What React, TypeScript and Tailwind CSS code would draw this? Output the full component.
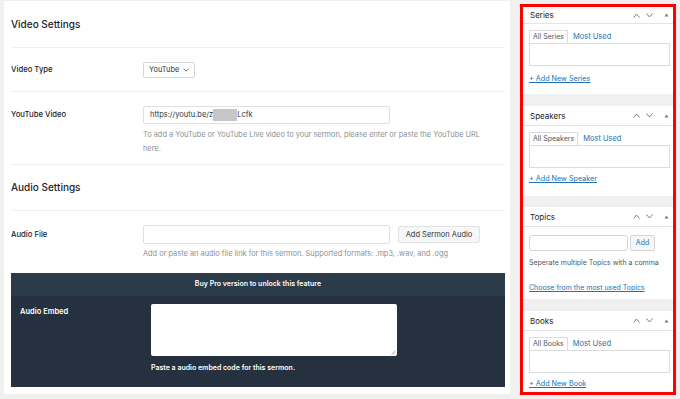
import React from "react";

const Chevrons = () => (
  <div className="flex items-center gap-[6px] text-[#787c82]">
    <svg width="7" height="5" viewBox="0 0 7 5" fill="none" stroke="currentColor" strokeWidth="1">
      <path d="M0.5 4.5 L3.5 1 L6.5 4.5" />
    </svg>
    <svg width="7" height="5" viewBox="0 0 7 5" fill="none" stroke="currentColor" strokeWidth="1">
      <path d="M0.5 0.5 L3.5 4 L6.5 0.5" />
    </svg>
    <svg width="5" height="4" viewBox="0 0 5 4" className="ml-[5px]">
      <path d="M0.5 3.5 L2.5 0.5 L4.5 3.5 Z" fill="currentColor" />
    </svg>
  </div>
);

const BoxHeader = ({ title, first }: { title: string; first?: boolean }) => (
  <div
    className={
      first
        ? "flex h-[17px] items-center justify-between border-b border-[#e4e4e7] pl-[7px] pr-[4px]"
        : "flex h-[20px] items-center justify-between border-b border-[#e4e4e7] pl-[7px] pr-[4px]"
    }
  >
    <span className="text-[8px] text-[#1d2327]">{title}</span>
    <Chevrons />
  </div>
);

const TaxBox = ({ title, tab, add, first }: { title: string; tab: string; add: string; first?: boolean }) => (
  <div className="flex shrink-0 flex-col bg-white">
    <BoxHeader title={title} first={first} />
    <div className={first ? "pl-[6px] pr-[3px] pt-[6px] pb-[9px]" : "pl-[6px] pr-[3px] pt-[6px] pb-[11px]"}>
      <div className="flex h-[13px] items-end">
        <div className="flex h-[13px] items-center border border-b-0 border-[#dcdcde] px-[3px] text-[7px] text-[#50575e]">
          {tab}
        </div>
        <span className="ml-[5px] flex h-[13px] items-center text-[7.5px] text-[#2271b1]">Most Used</span>
      </div>
      <div className="h-[23px] border border-[#dcdcde] bg-white" />
      <div className={first ? "mt-[7px] h-[12px] text-[7.2px] leading-[12px] text-[#2271b1] underline" : "mt-[5px] h-[12px] text-[7.2px] leading-[12px] text-[#2271b1] underline"}>{add}</div>
    </div>
  </div>
);

export default function App() {
  return (
    <div className="flex h-[399px] w-[680px] overflow-hidden bg-[#f0f0f1] font-['Inter',sans-serif]">
      {/* Main panel */}
      <div className="ml-[4px] mt-[1px] flex h-[393px] w-[506px] flex-col bg-white pl-[7px] pr-[5px]">
        <div className="flex h-[47px] shrink-0 items-center border-b border-[#f0f0f1]">
          <h2 className="text-[10px] font-medium text-[#1d2327]">Video Settings</h2>
        </div>

        <div className="flex h-[44px] shrink-0 items-center border-b border-[#f0f0f1]">
          <div className="w-[132px] text-[7.7px] font-medium text-[#1d2327]">Video Type</div>
          <div className="flex h-[16px] w-[52px] items-center justify-between rounded-[2px] border border-[#d5d5d8] pl-[5px] pr-[5px] text-[7.4px] text-[#2c3338]">
            <span>YouTube</span>
            <svg width="6" height="4" viewBox="0 0 6 4" fill="none" stroke="#50575e" strokeWidth="0.9">
              <path d="M0.5 0.7 L3 3.2 L5.5 0.7" />
            </svg>
          </div>
        </div>

        <div className="flex h-[73px] shrink-0 border-b border-[#f0f0f1] pt-[14px]">
          <div className="flex h-[18px] w-[132px] items-center text-[7.7px] font-medium text-[#1d2327]">YouTube Video</div>
          <div className="flex flex-col">
            <div className="flex h-[18px] w-[247px] items-center rounded-[2px] border border-[#e0e0e3] pl-[6px] text-[7.5px] text-[#2c3338]">
              <span>https://youtu.be/z</span>
              <span className="h-[12px] w-[24px] bg-[#c6c6c6]" />
              <span>Lcfk</span>
            </div>
            <div className="mt-[4px] text-[7.4px] leading-[14px] text-[#8c8f94]">
              <div className="whitespace-nowrap">To add a YouTube or YouTube Live video to your sermon, please enter or paste the YouTube URL</div>
              <div>here.</div>
            </div>
          </div>
        </div>

        <div className="flex h-[46px] shrink-0 items-center border-b border-[#f0f0f1]">
          <h2 className="text-[10px] font-medium text-[#1d2327]">Audio Settings</h2>
        </div>

        <div className="flex h-[62px] shrink-0 pt-[14px]">
          <div className="flex h-[19px] w-[132px] items-center text-[7.7px] font-medium text-[#1d2327]">Audio File</div>
          <div className="flex flex-col">
            <div className="flex items-center">
              <div className="h-[19px] w-[247px] rounded-[2px] border border-[#e0e0e3]" />
              <button className="ml-[8px] flex h-[17px] w-[82px] items-center justify-center rounded-[2px] border border-[#e2e2e5] bg-[#f6f7f7] text-[7.5px] text-[#2c3338]">
                Add Sermon Audio
              </button>
            </div>
            <div className="mt-[3px] whitespace-nowrap text-[7.4px] leading-[14px] text-[#8c8f94]">
              Add or paste an audio file link for this sermon. Supported formats: .mp3, .wav, and .ogg
            </div>
          </div>
        </div>

        <div className="flex h-[114px] shrink-0 flex-col">
          <div className="flex h-[23px] items-center justify-center bg-[#2c3b4a] text-[7px] font-semibold text-white">
            Buy Pro version to unlock this feature
          </div>
          <div className="flex flex-1 bg-[#25313e] pt-[8px]">
            <div className="w-[140px] pl-[9px] pt-[2px] text-[7.5px] font-semibold text-white">Audio Embed</div>
            <div className="flex flex-col">
              <div className="relative h-[52px] w-[246px] rounded-[2px] bg-white">
                <svg className="absolute bottom-[1px] right-[1px]" width="5" height="5" viewBox="0 0 5 5" stroke="#8c8f94" strokeWidth="0.7">
                  <path d="M4.5 0.5 L0.5 4.5 M4.5 2.5 L2.5 4.5" />
                </svg>
              </div>
              <div className="mt-[6px] text-[7px] font-semibold leading-[12px] text-white">Paste a audio embed code for this sermon.</div>
            </div>
          </div>
        </div>
      </div>

      {/* Sidebar */}
      <div className="ml-[10px] mt-[4px] flex h-[391px] w-[156px] flex-col overflow-hidden border-[3px] border-[#ff0000] bg-[#f0f0f1]">
        <TaxBox title="Series" tab="All Series" add="+ Add New Series" first />
        <div className="mt-[12px]">
          <TaxBox title="Speakers" tab="All Speakers" add="+ Add New Speaker" />
        </div>
        <div className="mt-[11px] flex shrink-0 flex-col bg-white">
          <BoxHeader title="Topics" />
          <div className="pl-[6px] pr-[3px] pt-[8px] pb-[5px]">
            <div className="flex items-center">
              <div className="h-[16px] w-[99px] rounded-[3px] border border-[#d5d5d8]" />
              <button className="ml-[2px] flex h-[16px] w-[25px] items-center justify-center rounded-[2px] border border-[#d5d5d8] bg-[#f6f7f7] text-[7px] text-[#2271b1]">
                Add
              </button>
            </div>
            <div className="mt-[6px] whitespace-nowrap text-[7px] leading-[12px] text-[#50575e]">Seperate multiple Topics with a comma</div>
            <div className="mt-[13px] whitespace-nowrap text-[7px] leading-[12px] text-[#2271b1] underline">Choose from the most used Topics</div>
          </div>
        </div>
        <div className="mt-[12px]">
          <TaxBox title="Books" tab="All Books" add="+ Add New Book" />
        </div>
      </div>
    </div>
  );
}
